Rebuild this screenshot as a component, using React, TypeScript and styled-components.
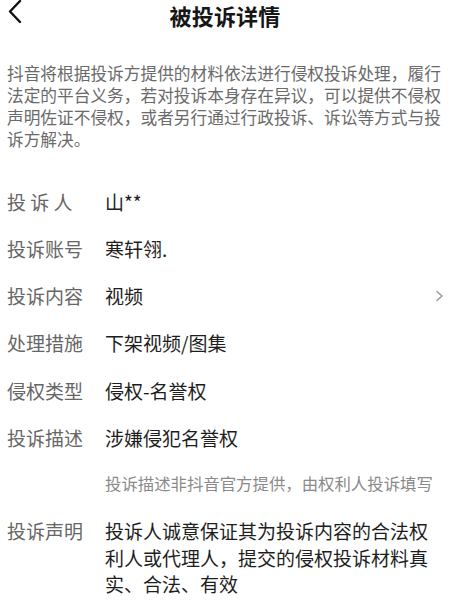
import styled, { createGlobalStyle } from 'styled-components';

const GlobalStyle = createGlobalStyle`
  body {
    margin: 0;
    background: #ffffff;
    font-family: "Noto Sans CJK SC", "Noto Sans", sans-serif;
  }
`;

const Page = styled.div`
  width: 450px;
  height: 604px;
  overflow: hidden;
  background: #fff;
`;

const Header = styled.div`
  position: relative;
  height: 30px;
  display: flex;
  align-items: center;
  justify-content: center;
`;

const Back = styled.div`
  position: absolute;
  left: 7px;
  top: 0;
  width: 16px;
  height: 24px;
  display: flex;
`;

const Title = styled.h1`
  margin: 0;
  font-size: 22px;
  line-height: 28px;
  font-weight: 700;
  color: #161616;
  letter-spacing: 0.2px;
`;

const Notice = styled.p`
  margin: 32px 0 0;
  padding: 0 3px 0 7px;
  font-size: 16.7px;
  line-height: 22px;
  color: #6a6a6a;
`;

const List = styled.div`
  margin-top: 39px;
  display: flex;
  flex-direction: column;
`;

const Row = styled.div<{ $tall?: boolean }>`
  display: flex;
  align-items: flex-start;
  padding: 0 5px 0 7px;
  height: ${(p) => (p.$tall ? 48 : 47)}px;
`;

const Label = styled.div`
  width: 98px;
  flex-shrink: 0;
  font-size: 19px;
  line-height: 26px;
  color: #666;
  white-space: pre;
`;

const Value = styled.div`
  flex: 1;
  font-size: 19px;
  line-height: 26px;
  color: #1e1e1e;
`;

const Arrow = styled.div`
  width: 10px;
  height: 26px;
  display: flex;
  align-items: center;
`;

const Note = styled.div`
  padding-left: 105px;
  height: 46px;
  font-size: 16.4px;
  line-height: 22px;
  color: #8a8a8a;
`;

const Statement = styled.div`
  display: flex;
  padding: 0 7px;
`;

const StatementText = styled(Value)`
  line-height: 26.5px;
  padding-right: 12px;
`;

const rows = [
  { label: '投 诉 人', value: '山**' },
  { label: '投诉账号', value: '寒轩翎.' },
  { label: '投诉内容', value: '视频', arrow: true },
  { label: '处理措施', value: '下架视频/图集', tall: true },
  { label: '侵权类型', value: '侵权-名誉权' },
  { label: '投诉描述', value: '涉嫌侵犯名誉权' },
];

export default function App() {
  return (
    <Page>
      <GlobalStyle />
      <Header>
        <Back>
          <svg width="16" height="24" viewBox="0 0 16 24">
            <path d="M13 1 L3 11.5 L13 22" fill="none" stroke="#111" strokeWidth="2.4" strokeLinecap="round" strokeLinejoin="round" />
          </svg>
        </Back>
        <Title>被投诉详情</Title>
      </Header>
      <Notice>
        抖音将根据投诉方提供的材料依法进行侵权投诉处理，履行法定的平台义务，若对投诉本身存在异议，可以提供不侵权声明佐证不侵权，或者另行通过行政投诉、诉讼等方式与投诉方解决。
      </Notice>
      <List>
        {rows.map((r) => (
          <Row key={r.label} $tall={r.tall}>
            <Label>{r.label}</Label>
            <Value>{r.value}</Value>
            {r.arrow && (
              <Arrow>
                <svg width="9" height="12" viewBox="0 0 9 12">
                  <path d="M2 1.5 L7 6 L2 10.5" fill="none" stroke="#9a9a9a" strokeWidth="1.5" strokeLinecap="round" strokeLinejoin="round" />
                </svg>
              </Arrow>
            )}
          </Row>
        ))}
        <Note>投诉描述非抖音官方提供，由权利人投诉填写</Note>
        <Statement>
          <Label>投诉声明</Label>
          <StatementText>投诉人诚意保证其为投诉内容的合法权利人或代理人，提交的侵权投诉材料真实、合法、有效</StatementText>
        </Statement>
      </List>
    </Page>
  );
}
